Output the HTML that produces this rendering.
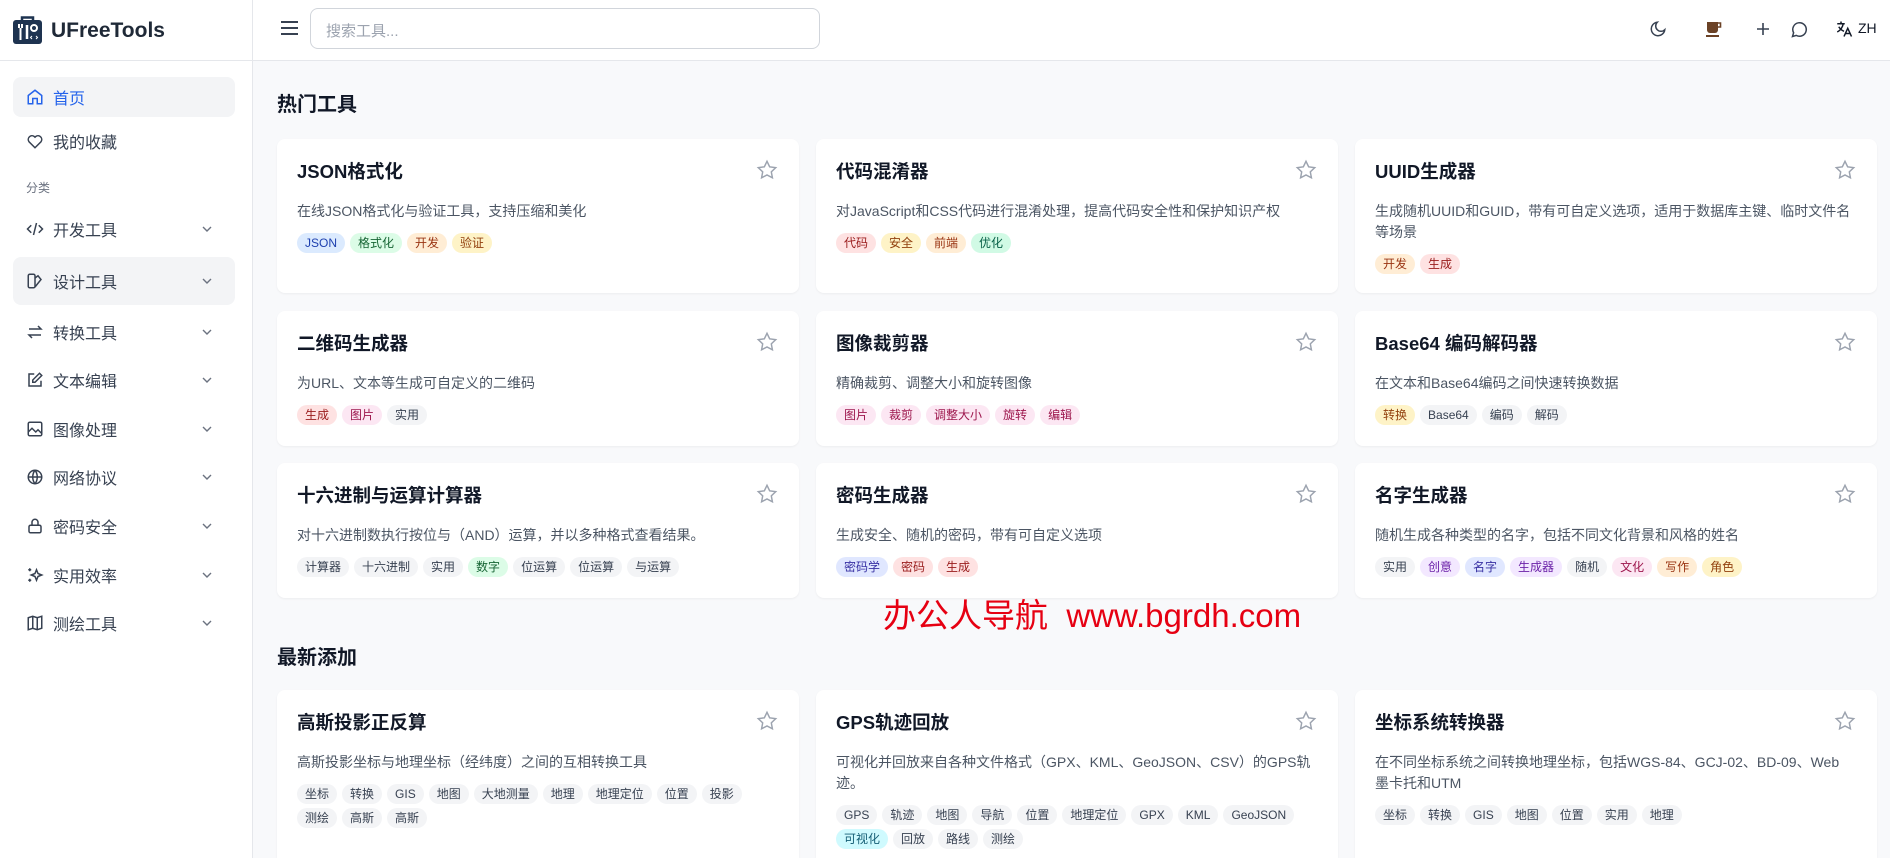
<!DOCTYPE html>
<html style="width:1890px;height:858px;overflow:hidden"><head><meta charset="utf-8">
<style>
*{box-sizing:border-box;margin:0;padding:0}
body{width:1890px;height:858px;overflow:hidden;background:#f8f9fb;font-family:"Liberation Sans","Noto Sans CJK SC",sans-serif;color:#111827;position:relative}
.side{position:absolute;left:0;top:0;width:253px;height:858px;background:#fff;border-right:1px solid #e5e7eb}
.logo{position:absolute;left:13px;top:15px}
.brand{position:absolute;left:51px;top:19px;font-size:21px;font-weight:bold;color:#1f2937}
.sideline{position:absolute;left:0;top:60px;width:253px;border-top:1px solid #e5e7eb}
.nav{position:absolute;left:13px;width:222px;height:40px;border-radius:8px;font-size:16px;color:#374151}
.nav.act{background:#f3f4f6}
.nav svg.ic{position:absolute;left:13px;top:11px;width:18px;height:18px}
.nav span{position:absolute;left:40px;top:50%;transform:translateY(-50%)}
.nav svg.ch{position:absolute;left:188px;top:14px}
.cat{position:absolute;left:26px;top:179px;font-size:12px;color:#6b7280}
.top{position:absolute;left:253px;top:0;right:0;height:61px;background:#fff;border-bottom:1px solid #e5e7eb}
.search{position:absolute;left:57px;top:8px;width:510px;height:41px;border:1px solid #d1d5db;border-radius:8px;font-size:15px;color:#9ca3af;padding:11px 15px}
h2{position:absolute;font-size:20px;font-weight:bold;color:#111827}
.card{position:absolute;width:522px;background:#fff;border-radius:8px;box-shadow:0 1px 2px rgba(0,0,0,.05);padding:0 20px;overflow:hidden}
.card .t{position:absolute;left:20px;top:21px;font-size:18.5px;font-weight:bold;line-height:24px}
.card .d{position:absolute;left:20px;top:62px;right:24px;font-size:14px;color:#4b5563;line-height:21px}
.card .tags{position:absolute;left:20px;right:20px;display:flex;flex-wrap:wrap;gap:4px 5px}
.card .star{position:absolute;right:21px;top:20px}
.tg{display:inline-block;height:20px;line-height:20px;padding:0 8px;border-radius:10px;font-size:12px;background:#f3f4f6;color:#374151}
.b{background:#dbeafe;color:#1e40af}.g{background:#dcfce7;color:#166534}.o{background:#ffedd5;color:#9a3412}.y{background:#fef3c7;color:#92400e}.r{background:#fee2e2;color:#991b1b}.p{background:#fce7f3;color:#9d174d}.i{background:#e0e7ff;color:#3730a3}.v{background:#f3e8ff;color:#6b21a8}.e{background:#d1fae5;color:#065f46}.c{background:#cffafe;color:#155e75}
.wm{position:absolute;left:883px;top:589px;font-size:33px;color:#e60012;white-space:nowrap}
</style></head><body>
<div class="side">
<svg class="logo" width="29" height="29" viewBox="0 0 29 29"><path d="M9 5V2.5h11V5" stroke="#1e3350" stroke-width="2.5" fill="none"/><rect x="0" y="5" width="29" height="24" rx="3" fill="#1e3350"/><path d="M6 9v4M9 9v4M7.5 13v12" stroke="#fff" stroke-width="2"/><path d="M14 10v14" stroke="#fff" stroke-width="2.5"/><circle cx="21" cy="13" r="3" fill="none" stroke="#fff" stroke-width="2"/><path d="M19 21l-1.5 1.5 1.5 1.5M23 21l1.5 1.5-1.5 1.5" stroke="#fff" stroke-width="1" fill="none"/></svg>
<div class="brand">UFreeTools</div>
<div class="sideline"></div>
<div class="nav act" style="top:77px;color:#2563eb"><svg class="ic" viewBox="0 0 24 24" fill="none" stroke="#2563eb" stroke-width="2"><path d="M3 10l9-7 9 7v11H15v-7H9v7H3z"/></svg><span>首页</span></div>
<div class="nav" style="top:121px"><svg class="ic" viewBox="0 0 24 24" fill="none" stroke="#374151" stroke-width="2"><path d="M12 21l-8-8a5 5 0 017-7l1 1 1-1a5 5 0 017 7z"/></svg><span>我的收藏</span></div>
<div class="cat">分类</div>
<div class="nav" style="top:209px"><svg class="ic" viewBox="0 0 24 24" fill="none" stroke="#374151" stroke-width="2"><path d="M7 7l-5 5 5 5M17 7l5 5-5 5M14 4l-4 16"/></svg><span>开发工具</span><svg class="ch" width="12" height="12" viewBox="0 0 12 12"><path d="M2 4l4 4 4-4" stroke="#6b7280" fill="none" stroke-width="1.4"/></svg></div>
<div class="nav act" style="top:257px;height:48px"><svg class="ic" style="top:15px" viewBox="0 0 24 24" fill="none" stroke="#374151" stroke-width="2"><rect x="3" y="3" width="9" height="18" rx="2"/><path d="M12 8l4-3 4 5-8 10"/></svg><span>设计工具</span><svg class="ch" width="12" height="12" style="top:18px" viewBox="0 0 12 12"><path d="M2 4l4 4 4-4" stroke="#6b7280" fill="none" stroke-width="1.4"/></svg></div>
<div class="nav" style="top:312px"><svg class="ic" viewBox="0 0 24 24" fill="none" stroke="#374151" stroke-width="2"><path d="M4 8h16l-4-4M20 16H4l4 4"/></svg><span>转换工具</span><svg class="ch" width="12" height="12" viewBox="0 0 12 12"><path d="M2 4l4 4 4-4" stroke="#6b7280" fill="none" stroke-width="1.4"/></svg></div>
<div class="nav" style="top:360px"><svg class="ic" viewBox="0 0 24 24" fill="none" stroke="#374151" stroke-width="2"><path d="M11 4H4v16h16v-7M18 3l3 3-9 9H9v-3z"/></svg><span>文本编辑</span><svg class="ch" width="12" height="12" viewBox="0 0 12 12"><path d="M2 4l4 4 4-4" stroke="#6b7280" fill="none" stroke-width="1.4"/></svg></div>
<div class="nav" style="top:409px"><svg class="ic" viewBox="0 0 24 24" fill="none" stroke="#374151" stroke-width="2"><rect x="3" y="3" width="18" height="18" rx="2"/><path d="M3 16l5-5 5 5 3-3 5 5"/></svg><span>图像处理</span><svg class="ch" width="12" height="12" viewBox="0 0 12 12"><path d="M2 4l4 4 4-4" stroke="#6b7280" fill="none" stroke-width="1.4"/></svg></div>
<div class="nav" style="top:457px"><svg class="ic" viewBox="0 0 24 24" fill="none" stroke="#374151" stroke-width="2"><circle cx="12" cy="12" r="9"/><path d="M3 12h18M12 3c-4 5-4 13 0 18M12 3c4 5 4 13 0 18"/></svg><span>网络协议</span><svg class="ch" width="12" height="12" viewBox="0 0 12 12"><path d="M2 4l4 4 4-4" stroke="#6b7280" fill="none" stroke-width="1.4"/></svg></div>
<div class="nav" style="top:506px"><svg class="ic" viewBox="0 0 24 24" fill="none" stroke="#374151" stroke-width="2"><rect x="4" y="11" width="16" height="10" rx="2"/><path d="M8 11V7a4 4 0 018 0v4"/></svg><span>密码安全</span><svg class="ch" width="12" height="12" viewBox="0 0 12 12"><path d="M2 4l4 4 4-4" stroke="#6b7280" fill="none" stroke-width="1.4"/></svg></div>
<div class="nav" style="top:555px"><svg class="ic" viewBox="0 0 24 24" fill="none" stroke="#374151" stroke-width="2"><path d="M14 5l2 5 5 2-5 2-2 5-2-5-5-2 5-2zM5 3v4M3 5h4M5 17v4M3 19h4"/></svg><span>实用效率</span><svg class="ch" width="12" height="12" viewBox="0 0 12 12"><path d="M2 4l4 4 4-4" stroke="#6b7280" fill="none" stroke-width="1.4"/></svg></div>
<div class="nav" style="top:603px"><svg class="ic" viewBox="0 0 24 24" fill="none" stroke="#374151" stroke-width="2"><path d="M3 5l6-2 6 2 6-2v16l-6 2-6-2-6 2zM9 3v16M15 5v16"/></svg><span>测绘工具</span><svg class="ch" width="12" height="12" viewBox="0 0 12 12"><path d="M2 4l4 4 4-4" stroke="#6b7280" fill="none" stroke-width="1.4"/></svg></div>
</div>
<div class="top">
<svg style="position:absolute;left:27px;top:20px" width="19" height="16" viewBox="0 0 19 16"><path d="M1 2h17M1 8h17M1 14h17" stroke="#374151" stroke-width="2"/></svg>
<div class="search">搜索工具...</div>
<svg style="position:absolute;left:1396px;top:20px" width="18" height="18" viewBox="0 0 24 24" fill="none" stroke="#374151" stroke-width="2"><path d="M21 13A9 9 0 1111 3a7 7 0 0010 10z"/></svg>
<svg style="position:absolute;left:1452px;top:20px" width="18" height="18" viewBox="0 0 18 18"><path d="M2 2h11v8a3 3 0 01-3 3H5a3 3 0 01-3-3z" fill="#6b4226"/><path d="M13 3h2.5v4H13" stroke="#6b4226" stroke-width="1.6" fill="none"/><rect x="1" y="15" width="13" height="2" fill="#6b4226"/></svg>
<svg style="position:absolute;left:1503px;top:22px" width="14" height="14" viewBox="0 0 14 14"><path d="M7 1v12M1 7h12" stroke="#374151" stroke-width="1.6"/></svg>
<svg style="position:absolute;left:1538px;top:20px" width="18" height="18" viewBox="0 0 24 24" fill="none" stroke="#374151" stroke-width="2"><path d="M7 20.5A9 9 0 103.5 17L2 22z"/></svg>
<svg style="position:absolute;left:1582px;top:20px" width="18" height="18" viewBox="0 0 24 24" fill="none" stroke="#111827" stroke-width="2"><path d="M3 5h10M8 2v3M5 9c2 3 4 5 7 6M11 5c-1 5-4 9-8 11M12 22l5-11 5 11M14 18h6"/></svg>
<div style="position:absolute;left:1605px;top:20px;font-size:14px;color:#111827">ZH</div>
</div>
<h2 style="left:277px;top:88px">热门工具</h2>
<h2 style="left:277px;top:641px">最新添加</h2>

<div class="card" style="left:277px;top:139px;height:154px"><div class="t">JSON格式化</div><svg class="star" width="22" height="22" viewBox="0 0 24 24" fill="none" stroke="#9ca3af" stroke-width="1.6"><path d="M12 2.5l2.9 6 6.6.9-4.8 4.6 1.2 6.5L12 17.4 6.1 20.5l1.2-6.5L2.5 9.4l6.6-.9z"/></svg><div class="d">在线JSON格式化与验证工具，支持压缩和美化</div><div class="tags" style="top:94px"><span class="tg b">JSON</span><span class="tg g">格式化</span><span class="tg o">开发</span><span class="tg y">验证</span></div></div>
<div class="card" style="left:816px;top:139px;height:154px"><div class="t">代码混淆器</div><svg class="star" width="22" height="22" viewBox="0 0 24 24" fill="none" stroke="#9ca3af" stroke-width="1.6"><path d="M12 2.5l2.9 6 6.6.9-4.8 4.6 1.2 6.5L12 17.4 6.1 20.5l1.2-6.5L2.5 9.4l6.6-.9z"/></svg><div class="d">对JavaScript和CSS代码进行混淆处理，提高代码安全性和保护知识产权</div><div class="tags" style="top:94px"><span class="tg r">代码</span><span class="tg y">安全</span><span class="tg o">前端</span><span class="tg e">优化</span></div></div>
<div class="card" style="left:1355px;top:139px;height:154px"><div class="t">UUID生成器</div><svg class="star" width="22" height="22" viewBox="0 0 24 24" fill="none" stroke="#9ca3af" stroke-width="1.6"><path d="M12 2.5l2.9 6 6.6.9-4.8 4.6 1.2 6.5L12 17.4 6.1 20.5l1.2-6.5L2.5 9.4l6.6-.9z"/></svg><div class="d">生成随机UUID和GUID，带有可自定义选项，适用于数据库主键、临时文件名等场景</div><div class="tags" style="top:115px"><span class="tg o">开发</span><span class="tg r">生成</span></div></div>

<div class="card" style="left:277px;top:311px;height:135px"><div class="t">二维码生成器</div><svg class="star" width="22" height="22" viewBox="0 0 24 24" fill="none" stroke="#9ca3af" stroke-width="1.6"><path d="M12 2.5l2.9 6 6.6.9-4.8 4.6 1.2 6.5L12 17.4 6.1 20.5l1.2-6.5L2.5 9.4l6.6-.9z"/></svg><div class="d">为URL、文本等生成可自定义的二维码</div><div class="tags" style="top:94px"><span class="tg r">生成</span><span class="tg p">图片</span><span class="tg">实用</span></div></div>
<div class="card" style="left:816px;top:311px;height:135px"><div class="t">图像裁剪器</div><svg class="star" width="22" height="22" viewBox="0 0 24 24" fill="none" stroke="#9ca3af" stroke-width="1.6"><path d="M12 2.5l2.9 6 6.6.9-4.8 4.6 1.2 6.5L12 17.4 6.1 20.5l1.2-6.5L2.5 9.4l6.6-.9z"/></svg><div class="d">精确裁剪、调整大小和旋转图像</div><div class="tags" style="top:94px"><span class="tg p">图片</span><span class="tg p">裁剪</span><span class="tg p">调整大小</span><span class="tg p">旋转</span><span class="tg p">编辑</span></div></div>
<div class="card" style="left:1355px;top:311px;height:135px"><div class="t">Base64 编码解码器</div><svg class="star" width="22" height="22" viewBox="0 0 24 24" fill="none" stroke="#9ca3af" stroke-width="1.6"><path d="M12 2.5l2.9 6 6.6.9-4.8 4.6 1.2 6.5L12 17.4 6.1 20.5l1.2-6.5L2.5 9.4l6.6-.9z"/></svg><div class="d">在文本和Base64编码之间快速转换数据</div><div class="tags" style="top:94px"><span class="tg y">转换</span><span class="tg">Base64</span><span class="tg">编码</span><span class="tg">解码</span></div></div>

<div class="card" style="left:277px;top:463px;height:135px"><div class="t">十六进制与运算计算器</div><svg class="star" width="22" height="22" viewBox="0 0 24 24" fill="none" stroke="#9ca3af" stroke-width="1.6"><path d="M12 2.5l2.9 6 6.6.9-4.8 4.6 1.2 6.5L12 17.4 6.1 20.5l1.2-6.5L2.5 9.4l6.6-.9z"/></svg><div class="d">对十六进制数执行按位与（AND）运算，并以多种格式查看结果。</div><div class="tags" style="top:94px"><span class="tg">计算器</span><span class="tg">十六进制</span><span class="tg">实用</span><span class="tg g">数字</span><span class="tg">位运算</span><span class="tg">位运算</span><span class="tg">与运算</span></div></div>
<div class="card" style="left:816px;top:463px;height:135px"><div class="t">密码生成器</div><svg class="star" width="22" height="22" viewBox="0 0 24 24" fill="none" stroke="#9ca3af" stroke-width="1.6"><path d="M12 2.5l2.9 6 6.6.9-4.8 4.6 1.2 6.5L12 17.4 6.1 20.5l1.2-6.5L2.5 9.4l6.6-.9z"/></svg><div class="d">生成安全、随机的密码，带有可自定义选项</div><div class="tags" style="top:94px"><span class="tg i">密码学</span><span class="tg r">密码</span><span class="tg r">生成</span></div></div>
<div class="card" style="left:1355px;top:463px;height:135px"><div class="t">名字生成器</div><svg class="star" width="22" height="22" viewBox="0 0 24 24" fill="none" stroke="#9ca3af" stroke-width="1.6"><path d="M12 2.5l2.9 6 6.6.9-4.8 4.6 1.2 6.5L12 17.4 6.1 20.5l1.2-6.5L2.5 9.4l6.6-.9z"/></svg><div class="d">随机生成各种类型的名字，包括不同文化背景和风格的姓名</div><div class="tags" style="top:94px"><span class="tg">实用</span><span class="tg v">创意</span><span class="tg i">名字</span><span class="tg v">生成器</span><span class="tg">随机</span><span class="tg p">文化</span><span class="tg o">写作</span><span class="tg y">角色</span></div></div>

<div class="card" style="left:277px;top:690px;height:168px;border-radius:8px 8px 0 0"><div class="t">高斯投影正反算</div><svg class="star" width="22" height="22" viewBox="0 0 24 24" fill="none" stroke="#9ca3af" stroke-width="1.6"><path d="M12 2.5l2.9 6 6.6.9-4.8 4.6 1.2 6.5L12 17.4 6.1 20.5l1.2-6.5L2.5 9.4l6.6-.9z"/></svg><div class="d">高斯投影坐标与地理坐标（经纬度）之间的互相转换工具</div><div class="tags" style="top:94px"><span class="tg">坐标</span><span class="tg">转换</span><span class="tg">GIS</span><span class="tg">地图</span><span class="tg">大地测量</span><span class="tg">地理</span><span class="tg">地理定位</span><span class="tg">位置</span><span class="tg">投影</span><span class="tg">测绘</span><span class="tg">高斯</span><span class="tg">高斯</span></div></div>
<div class="card" style="left:816px;top:690px;height:168px;border-radius:8px 8px 0 0"><div class="t">GPS轨迹回放</div><svg class="star" width="22" height="22" viewBox="0 0 24 24" fill="none" stroke="#9ca3af" stroke-width="1.6"><path d="M12 2.5l2.9 6 6.6.9-4.8 4.6 1.2 6.5L12 17.4 6.1 20.5l1.2-6.5L2.5 9.4l6.6-.9z"/></svg><div class="d">可视化并回放来自各种文件格式（GPX、KML、GeoJSON、CSV）的GPS轨迹。</div><div class="tags" style="top:115px"><span class="tg">GPS</span><span class="tg">轨迹</span><span class="tg">地图</span><span class="tg">导航</span><span class="tg">位置</span><span class="tg">地理定位</span><span class="tg">GPX</span><span class="tg">KML</span><span class="tg">GeoJSON</span><span class="tg c">可视化</span><span class="tg">回放</span><span class="tg">路线</span><span class="tg">测绘</span></div></div>
<div class="card" style="left:1355px;top:690px;height:168px;border-radius:8px 8px 0 0"><div class="t">坐标系统转换器</div><svg class="star" width="22" height="22" viewBox="0 0 24 24" fill="none" stroke="#9ca3af" stroke-width="1.6"><path d="M12 2.5l2.9 6 6.6.9-4.8 4.6 1.2 6.5L12 17.4 6.1 20.5l1.2-6.5L2.5 9.4l6.6-.9z"/></svg><div class="d">在不同坐标系统之间转换地理坐标，包括WGS-84、GCJ-02、BD-09、Web墨卡托和UTM</div><div class="tags" style="top:115px"><span class="tg">坐标</span><span class="tg">转换</span><span class="tg">GIS</span><span class="tg">地图</span><span class="tg">位置</span><span class="tg">实用</span><span class="tg">地理</span></div></div>

<div class="wm">办公人导航&nbsp; www.bgrdh.com</div>
</body></html>
